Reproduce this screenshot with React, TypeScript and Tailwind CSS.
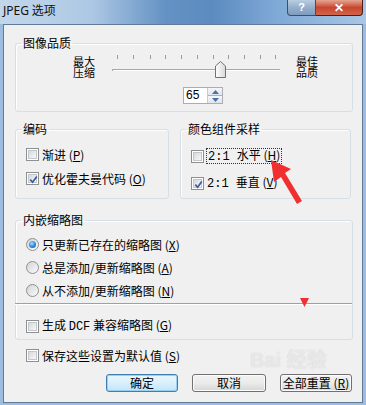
import React from "react";

function CheckBox({ checked = false }: { checked?: boolean }) {
  return (
    <div className="w-[13px] h-[13px] shrink-0 border border-[#8e8f8f] bg-white p-[1px]">
      <div className="w-full h-full border border-[#c3c6cb] bg-gradient-to-br from-[#d5d8dc] to-[#f8f8f8] relative">
        {checked && (
          <svg viewBox="0 0 9 9" className="absolute inset-0 w-[9px] h-[9px]">
            <path d="M1.3 4.6 L3.6 7.2 L7.8 1.4" fill="none" stroke="#3c5a9c" strokeWidth="1.7" />
          </svg>
        )}
      </div>
    </div>
  );
}

function Radio({ checked = false }: { checked?: boolean }) {
  return (
    <div className="w-[13px] h-[13px] shrink-0 rounded-full border border-[#8e8f8f] bg-gradient-to-br from-[#d2d4d7] to-[#fbfbfb] flex items-center justify-center">
      {checked && (
        <div className="w-[7px] h-[7px] rounded-full bg-[radial-gradient(circle_at_40%_35%,#a8dcff,#2a86d8_55%,#0d4f95)]" />
      )}
    </div>
  );
}

function Button({ children, focused = false, className = "" }: { children: React.ReactNode; focused?: boolean; className?: string }) {
  return (
    <div
      className={
        "h-[18px] rounded-[3px] border flex items-center justify-center text-[12px] leading-[12px] " +
        (focused
          ? "border-[#3c7fb1] bg-gradient-to-b from-[#eaf6fd] via-[#d9f0fc] to-[#bee6fd] shadow-[inset_0_0_0_1px_#98d1ef]"
          : "border-[#707070] bg-gradient-to-b from-[#f2f2f2] via-[#ebebeb] to-[#d6d6d6] shadow-[inset_0_0_0_1px_#fcfcfc]") +
        " " +
        className
      }
    >
      {children}
    </div>
  );
}

function Group({ title, className = "", children }: { title: string; className?: string; children: React.ReactNode }) {
  return (
    <fieldset className={"border border-[#d5dfe5] rounded-[3px] shadow-[inset_1px_1px_0_#ffffff] " + className}>
      <legend className="ml-[5px] px-[2px] text-[12px] leading-[14px]">{title}</legend>
      {children}
    </fieldset>
  );
}

export default function App() {
  const ticks = [7, 23, 40, 55, 71, 87, 103, 118, 134, 150, 165];
  return (
    <div className="relative w-[366px] h-[405px] bg-[#9cbde0] flex flex-col px-[3px] pb-[2px] text-black font-['Noto_Sans_CJK_SC',sans-serif] overflow-hidden">
      {/* title bar */}
      <div className="h-[24px] -mx-[3px] flex items-start bg-[linear-gradient(90deg,#c3d7eb_0%,#adc8e4_25%,#6592c4_45%,#5c8bc0_58%,#7ea8d6_75%,#a9c6e4_100%)]">
        <div className="ml-[3px] mt-[3px] text-[12px] leading-[14px] text-[#111]">
          <span className="font-['Noto_Sans',sans-serif]">JPEG</span> 选项
        </div>
        <div className="flex-1" />
        <div className="flex mr-[3px]">
          <div className="w-[29px] h-[16px] border border-t-0 border-[#3b4f6b] rounded-bl-[4px] bg-gradient-to-b from-[#b9cde2] via-[#95afcc] to-[#7e9cbf] flex items-center justify-center text-white font-bold text-[11px] leading-[11px] font-['Liberation_Sans',sans-serif]">
            ?
          </div>
          <div className="w-[47px] h-[16px] border border-t-0 border-l-0 border-[#4a1f1a] rounded-br-[4px] bg-gradient-to-b from-[#e6a493] via-[#c8452d] to-[#d2634b] flex items-center justify-center text-white font-bold text-[12px] leading-[12px] font-['Liberation_Sans',sans-serif]">
            ✕
          </div>
        </div>
      </div>

      {/* client area */}
      <div className="flex-1 bg-[#f0f0f0] border border-[#5f7b99] flex flex-col">
        <Group title="图像品质" className="ml-[11px] mt-[11px] w-[338px] h-[76px]">
          <div className="flex items-start mt-[5px]">
            <div className="ml-[57px] mt-[1px] text-[11px] leading-[11px] w-[24px]">最大压缩</div>
            <div className="ml-[13px] flex flex-col">
              <svg width="172" height="24" viewBox="0 0 172 24">
                {ticks.map((x) => (
                  <line key={x} x1={x + 0.5} y1="0" x2={x + 0.5} y2="4" stroke="#9a9a9a" />
                ))}
                <line x1="2" y1="14.5" x2="170" y2="14.5" stroke="#a8a8a8" />
                <line x1="2.5" y1="14" x2="2.5" y2="16" stroke="#a8a8a8" />
                <line x1="3" y1="15.5" x2="170" y2="15.5" stroke="#ffffff" />
                <defs>
                  <linearGradient id="thumb" x1="0" y1="0" x2="1" y2="0">
                    <stop offset="0" stopColor="#ffffff" />
                    <stop offset="1" stopColor="#d8d8d8" />
                  </linearGradient>
                </defs>
                <path d="M105.5 22.5 L105.5 11 L110.5 6.5 L115.5 11 L115.5 22.5 Z" fill="url(#thumb)" stroke="#727272" strokeLinejoin="round" />
              </svg>
            </div>
            <div className="ml-[14px] mt-[1px] text-[11px] leading-[11px] w-[24px]">最佳品质</div>
          </div>
          <div className="ml-[167px] mt-[8px] w-[40px] h-[17px] border border-[#abadb3] bg-white flex">
            <div className="flex-1 pl-[2px] text-[12px] leading-[15px] font-['Liberation_Sans',sans-serif]">65</div>
            <div className="w-[15px] flex flex-col border-l border-[#c9cbd0]">
              <div className="flex-1 border-b border-[#a6b3c6] bg-gradient-to-b from-[#f4f6f9] to-[#dfe5ee] flex items-center justify-center">
                <svg width="7" height="4" viewBox="0 0 7 4">
                  <path d="M0 4 L3.5 0 L7 4 Z" fill="#4d6fa8" />
                </svg>
              </div>
              <div className="flex-1 bg-gradient-to-b from-[#f4f6f9] to-[#dfe5ee] flex items-center justify-center">
                <svg width="7" height="4" viewBox="0 0 7 4">
                  <path d="M0 0 L3.5 4 L7 0 Z" fill="#4d6fa8" />
                </svg>
              </div>
            </div>
          </div>
        </Group>

        <div className="flex gap-[11px] ml-[11px] mt-[10px]">
          <Group title="编码" className="w-[154px] h-[77px]">
            <div className="flex flex-col gap-[11px] mt-[12px] ml-[10px] text-[12px] leading-[13px]">
              <div className="flex items-center gap-[3px]">
                <CheckBox />
                <span>
                  渐进 (<u>P</u>)
                </span>
              </div>
              <div className="flex items-center gap-[3px]">
                <CheckBox checked />
                <span>
                  优化霍夫曼代码 (<u>O</u>)
                </span>
              </div>
            </div>
          </Group>
          <Group title="颜色组件采样" className="w-[171px] h-[77px]">
            <div className="flex flex-col gap-[11px] mt-[12px] ml-[10px] text-[12px] leading-[13px]">
              <div className="flex items-center gap-[2px]">
                <CheckBox />
                <span className="border border-dotted border-[#333] px-[1px] leading-[12px] whitespace-pre">
                  <span className="font-['Liberation_Mono',monospace]">2:1 </span>水平 (<u>H</u>)
                </span>
              </div>
              <div className="flex items-center gap-[3px]">
                <CheckBox checked />
                <span className="whitespace-pre">
                  <span className="font-['Liberation_Mono',monospace]">2:1 </span>垂直 (<u>V</u>)
                </span>
              </div>
            </div>
          </Group>
        </div>

        <Group title="内嵌缩略图" className="ml-[11px] mt-[14px] w-[338px] h-[127px]">
          <div className="flex flex-col gap-[10px] mt-[11px] ml-[10px] text-[12px] leading-[13px]">
            <div className="flex items-center gap-[3px]">
              <Radio checked />
              <span>
                只更新已存在的缩略图 (<u>X</u>)
              </span>
            </div>
            <div className="flex items-center gap-[3px]">
              <Radio />
              <span>
                总是添加/更新缩略图 (<u>A</u>)
              </span>
            </div>
            <div className="flex items-center gap-[3px]">
              <Radio />
              <span>
                从不添加/更新缩略图 (<u>N</u>)
              </span>
            </div>
          </div>
          <div className="mt-[6px] -ml-[1px] h-[1px] bg-[#a0a0a0] shadow-[0_1px_0_#ffffff]" />
          <div className="flex items-center gap-[3px] mt-[14px] ml-[10px] text-[12px] leading-[13px]">
            <CheckBox />
            <span className="whitespace-pre">
              生成 <span className="font-['Liberation_Mono',monospace]">DCF</span> 兼容缩略图 (<u>G</u>)
            </span>
          </div>
        </Group>

        <div className="flex items-center gap-[3px] mt-[9px] ml-[22px] text-[12px] leading-[13px]">
          <CheckBox />
          <span>
            保存这些设置为默认值 (<u>S</u>)
          </span>
        </div>

        <div className="flex gap-[14px] mt-[12px] ml-[102px]">
          <Button focused className="w-[72px]">确定</Button>
          <Button className="w-[74px]">取消</Button>
          <Button className="w-[72px]">
            全部重置 (<u>R</u>)
          </Button>
        </div>
      </div>

      {/* watermark */}
      <div className="absolute left-[250px] top-[350px] pointer-events-none text-white/60 [text-shadow:0_0_1px_#c4c4c4] leading-none text-[20px] font-bold font-['Liberation_Sans','Noto_Sans_CJK_SC',sans-serif]">
        Bai 经验
      </div>

      {/* red annotations */}
      <svg className="absolute inset-0 pointer-events-none" width="366" height="405" viewBox="0 0 366 405">
        <polygon points="271,160 291,169 285,173 302,201 297,204 281,177 274,182" fill="#f03030" />
        <polygon points="300,298 309,298 304.5,307" fill="#f03030" />
      </svg>
    </div>
  );
}
